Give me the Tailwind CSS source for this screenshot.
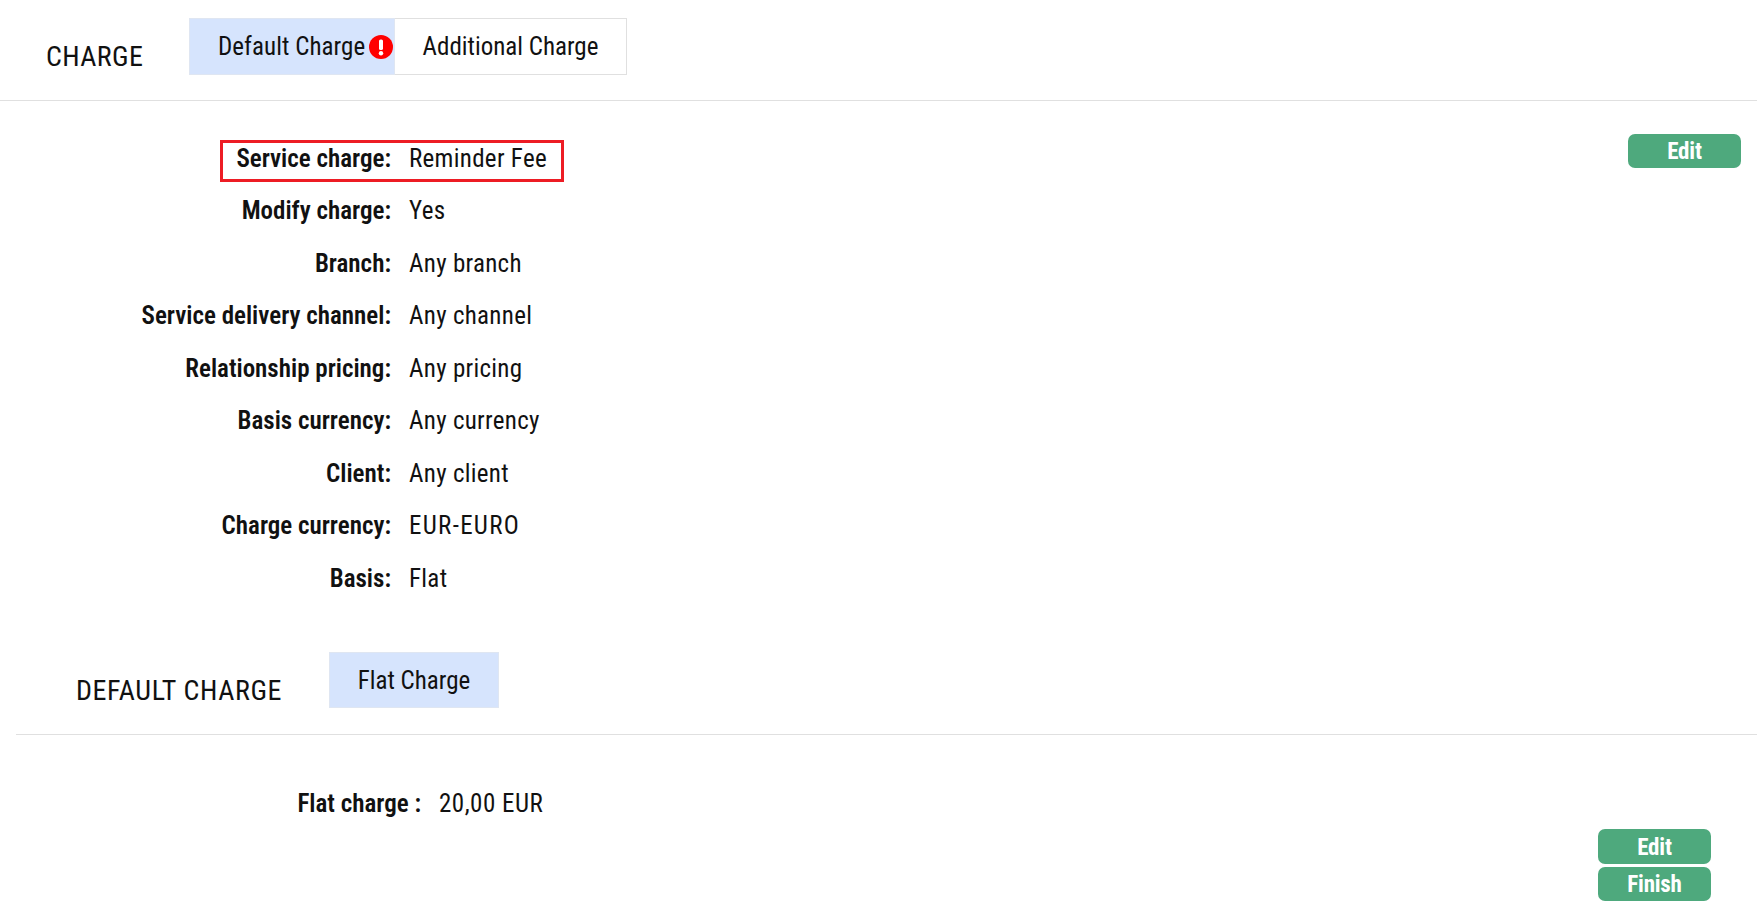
<!DOCTYPE html>
<html lang="en">
<head>
  <meta charset="UTF-8" />
  <title>Charge</title>
  <script src="https://cdn.jsdelivr.net/npm/@tailwindcss/browser@4"></script>
</head>
<body class="bg-white text-[#111] font-['Roboto',sans-serif] [font-stretch:85%] text-[25px] overflow-hidden">
  <div class="h-[920px] relative">
    <!-- charge header -->
    <div class="h-[101px] border-b border-[#e0e0e0] flex items-start pl-[46px]">
      <h2 class="mt-[39px] w-[143px] text-[28px] tracking-[0.4px] leading-[36px]">CHARGE</h2>
      <div class="mt-[18px] flex h-[57px] items-stretch">
        <button class="w-[206px] bg-[#d6e4fd] border border-[#dfe6f2] flex items-center pl-[28px] pt-[1px] gap-[4px] whitespace-nowrap tracking-[0.05px]">
          Default Charge
          <svg class="w-[24px] h-[24px] shrink-0" viewBox="0 0 24 24"><circle cx="12" cy="12" r="12" fill="#f00"/><rect x="10" y="4.5" width="4" height="10.5" rx="1.6" fill="#fff"/><circle cx="12" cy="18.3" r="2.2" fill="#fff"/></svg>
        </button>
        <button class="w-[232px] border border-[#e0e0e0] border-l-0 pt-[1px]">Additional Charge</button>
      </div>
    </div>

    <div class="relative pt-[31px]">
      <span class="absolute left-[220px] top-[39px] w-[344px] h-[42px] border-[3px] border-[#ed1c24]"></span>
      <button class="absolute left-[1628px] top-[33px] w-[113px] h-[34px] bg-[#4ea97d] text-white rounded-[7px] font-bold text-[23px] tracking-[-0.2px] leading-none">Edit</button>
      <dl class="grid grid-cols-[391px_1fr] gap-x-[18px] auto-rows-[52.5px] items-center">
        <dt class="text-right font-semibold">Service charge:</dt><dd class="tracking-[0.3px]">Reminder Fee</dd>
        <dt class="text-right font-semibold">Modify charge:</dt><dd class="tracking-[0.3px]">Yes</dd>
        <dt class="text-right font-semibold">Branch:</dt><dd class="tracking-[0.3px]">Any branch</dd>
        <dt class="text-right font-semibold">Service delivery channel:</dt><dd class="tracking-[0.3px]">Any channel</dd>
        <dt class="text-right font-semibold">Relationship pricing:</dt><dd class="tracking-[0.3px]">Any pricing</dd>
        <dt class="text-right font-semibold">Basis currency:</dt><dd class="tracking-[0.3px]">Any currency</dd>
        <dt class="text-right font-semibold">Client:</dt><dd class="tracking-[0.3px]">Any client</dd>
        <dt class="text-right font-semibold">Charge currency:</dt><dd class="tracking-[1.3px]">EUR-EURO</dd>
        <dt class="text-right font-semibold">Basis:</dt><dd class="tracking-[0.3px]">Flat</dd>
      </dl>
    </div>

    <!-- default charge -->
    <div class="mt-[47px] ml-[16px] h-[83px] border-b border-[#e0e0e0] flex items-start pl-[60px]">
      <h2 class="mt-[21px] w-[253px] text-[28px] tracking-[0.6px] leading-[36px]">DEFAULT CHARGE</h2>
      <button class="w-[170px] h-[56px] bg-[#d6e4fd] border border-[#dfe6f2] pt-[2px]">Flat Charge</button>
    </div>

    <div class="flex items-center mt-[51px] h-[36px]">
      <span class="w-[421px] text-right font-semibold">Flat charge :</span>
      <span class="ml-[18px] tracking-[0.5px]">20,00 EUR</span>
    </div>

    <div class="absolute left-[1598px] top-[829px] w-[113px] flex flex-col gap-[3px]">
      <button class="h-[35px] pt-[1px] bg-[#4ea97d] text-white rounded-[7px] font-bold text-[23px] tracking-[-0.2px] leading-none">Edit</button>
      <button class="h-[34px] bg-[#4ea97d] text-white rounded-[7px] font-bold text-[23px] tracking-[-0.2px] leading-none">Finish</button>
    </div>
  </div>
</body>
</html>
